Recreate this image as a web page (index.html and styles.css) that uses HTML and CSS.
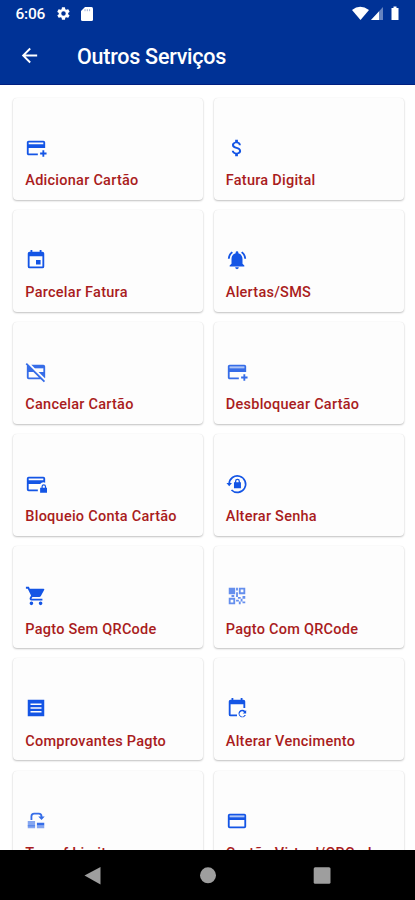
FILE: index.html
```html
<!DOCTYPE html>
<html lang="pt-BR">
<head>
<meta charset="utf-8">
<meta name="viewport" content="width=device-width">
<title>Outros Serviços</title>
<link rel="stylesheet" href="styles.css">
</head>
<body>
<div class="screen">
<header class="top">
  <div class="status">
    <span class="clock">6:06</span>
    <svg class="gear" viewBox="0 0 24 24"><path d="M19.4 13c.1-.3.1-.6.1-1s0-.7-.1-1l2.1-1.600a.5.5 0 0 0 .1-.6l-2-3.500a.5.5 0 0 0-.6-.2l-2.500 1a7 7 0 0 0-1.700-1l-.4-2.600a.5.5 0 0 0-.5-.4h-4a.5.5 0 0 0-.5.4L9 5.100a7 7 0 0 0-1.700 1l-2.500-1a.5.5 0 0 0-.6.2l-2 3.500a.5.5 0 0 0 .1.6L4.500 11a7 7 0 0 0 0 2l-2.200 1.600a.5.5 0 0 0-.1.6l2 3.500c.1.2.4.3.6.2l2.500-1a7 7 0 0 0 1.700 1l.4 2.600c0 .3.3.4.5.4h4c.3 0 .5-.2.5-.4l.4-2.600a7 7 0 0 0 1.700-1l2.500 1c.2.1.5 0 .6-.2l2-3.500a.5.5 0 0 0-.1-.6zM12 15.600a3.600 3.600 0 1 1 0-7.200 3.600 3.600 0 0 1 0 7.200z"/></svg>
    <svg class="sd" viewBox="0 0 12 14"><path d="M4 0h6.500Q12 0 12 1.500v11Q12 14 10.500 14h-9Q0 14 0 12.500V4z"/><path class="slots" d="M4 2.200v2M6.300 2.200v2M8.600 2.200v2"/></svg>
    <svg class="signals" viewBox="0 0 50 16"><path d="M0 4Q8-2.500 17 4L8.500 14z"/><path opacity=".4" d="M31 1v13H19z"/><path d="M27 5.500V14h-8z"/><path d="M39.500 2h2V.5h3V2h2v12h-7z"/></svg>
  </div>
  <div class="bar">
    <svg class="back" viewBox="0 0 24 24"><path d="M20 11H7.830l5.590-5.590L12 4l-8 8 8 8 1.410-1.410L7.830 13H20z"/></svg>
    <h1>Outros Serviços</h1>
  </div>
</header>
<main class="grid">
  <a class="card"><svg viewBox="0 0 24 24"><path d="M20 4H4C2.890 4 2 4.890 2 6v12c0 1.110.89 2 2 2h10v-2H4v-6h18V6c0-1.110-.89-2-2-2zm0 4H4V6h16zM19 14.500h2V17h2.500v2H21v2.500h-2V19h-2.500v-2H19z"/></svg><span>Adicionar Cartão</span></a>
  <a class="card"><svg viewBox="0 0 24 24"><path d="M11.800 10.900c-2.270-.59-3-1.200-3-2.150 0-1.090 1.010-1.850 2.700-1.850 1.780 0 2.440.85 2.500 2.100h2.210c-.07-1.720-1.120-3.300-3.210-3.810V3h-3v2.160C8.060 5.580 6.500 6.840 6.500 8.770c0 2.310 1.910 3.460 4.700 4.130 2.500.6 3 1.480 3 2.410 0 .69-.49 1.790-2.700 1.790-2.060 0-2.870-.92-2.980-2.100h-2.200c.12 2.190 1.760 3.420 3.680 3.830V21h3v-2.150c1.950-.37 3.500-1.500 3.500-3.550 0-2.840-2.430-3.810-4.700-4.400z"/></svg><span>Fatura Digital</span></a>
  <a class="card"><svg viewBox="0 0 24 24"><path d="M17 12h-5v5h5zM16 1v2H8V1H6v2H5a2 2 0 0 0-2 2v14a2 2 0 0 0 2 2h14a2 2 0 0 0 2-2V5a2 2 0 0 0-2-2h-1V1zm3 18H5V8h14z"/></svg><span>Parcelar Fatura</span></a>
  <a class="card"><svg viewBox="0 0 24 24"><path d="M7.580 4.080 6.150 2.650C3.750 4.480 2.170 7.300 2.030 10.500h2a8.450 8.450 0 0 1 3.550-6.420zM19.970 10.500h2c-.15-3.200-1.730-6.020-4.120-7.850l-1.420 1.430a8.500 8.500 0 0 1 3.540 6.420zM18 11c0-3.070-1.640-5.640-4.500-6.320V4a1.500 1.500 0 0 0-3 0v.68C7.630 5.360 6 7.920 6 11v5l-2 2v1h16v-1l-2-2zm-6 11a2 2 0 0 0 2-2h-4a2 2 0 0 0 2 2z"/></svg><span>Alertas/SMS</span></a>
  <a class="card"><svg class="soft" viewBox="0 0 24 24"><path opacity=".35" d="M8.800 6H20v2h-9.200z"/><path d="M6.830 4H20a2 2 0 0 1 2 2v12c0 .34-.09.66-.23.940L14.830 12H20V8h-9.170zM20.490 23.310 17.170 20H4a2 2 0 0 1-2-2V6c0-.34.08-.66.230-.93L.69 3.510 2.100 2.100l19.800 19.800zM4 12v6h11.170l-6-6z"/></svg><span>Cancelar Cartão</span></a>
  <a class="card"><svg class="soft" viewBox="0 0 24 24"><path opacity=".4" d="M4 6h16v2H4z"/><path d="M20 4H4C2.890 4 2 4.890 2 6v12c0 1.110.89 2 2 2h10v-2H4v-6h18V6c0-1.110-.89-2-2-2zm0 4H4V6h16zM19 14.500h2V17h2.500v2H21v2.500h-2V19h-2.500v-2H19z"/></svg><span>Desbloquear Cartão</span></a>
  <a class="card"><svg viewBox="0 0 24 24"><path d="M20 4H4a2 2 0 0 0-2 2v12a2 2 0 0 0 2 2h10v-2H4v-6h12.500q2-2.500 5.500-1.500V6a2 2 0 0 0-2-2zm0 4H4V6h16z"/><path fill-rule="evenodd" d="M23 16v-1.200a2.500 2.500 0 0 0-5 0V16h-1.500v5.500h8V16zm-3.700 0v-1.200a1.200 1.200 0 0 1 2.400 0V16z"/></svg><span>Bloqueio Conta Cartão</span></a>
  <a class="card"><svg viewBox="0 0 24 24"><path class="ring" d="M3.400 12a9 9 0 1 1 2.600 6.500"/><path d="M.5 11H6.500L3.500 14.500z"/><path fill-rule="evenodd" d="M15.200 10V9a2.700 2.700 0 0 0-5.400 0v1H8.700v6.500h7.600V10zm-4 0V9a1.300 1.300 0 0 1 2.600 0v1z"/></svg><span>Alterar Senha</span></a>
  <a class="card"><svg viewBox="0 0 24 24"><path d="M7 18a2 2 0 1 0 0 4 2 2 0 0 0 0-4zM1 2v2h2l3.600 7.590-1.350 2.450C4.520 15.370 5.480 17 7 17h12v-2H7.420a.25.25 0 0 1-.25-.25l.93-1.750h7.450c.75 0 1.410-.41 1.750-1.030l3.580-6.490A1 1 0 0 0 20 4H5.210l-.94-2zm16 16a2 2 0 1 0 0 4 2 2 0 0 0 0-4z"/></svg><span>Pagto Sem QRCode</span></a>
  <a class="card"><svg class="faint" viewBox="0 0 24 24"><path fill-rule="evenodd" d="M3 3h7v7H3zm2 2v3h3V5zM14 3h7v7h-7zm2 2v3h3V5zM3 14h7v7H3zm2 2v3h3v-3zM11 3h2v3h-2zM11 8h2v5h-2zM6 11h3v2H6zM13 13h3v2h-3zM11 16h3v2h-3zM16 15h2v3h-2zM18 12h3v3h-3zM14 18h2v3h-2zM18 18h3v2h-3zM5 5h3v3H5z"/></svg><span>Pagto Com QRCode</span></a>
  <a class="card"><svg viewBox="0 0 24 24"><path fill-rule="evenodd" d="M3 3h18v18H3zm3 4v1.700h12V7zm0 4.100v1.700h12v-1.700zm0 4.200V17h12v-1.700z"/></svg><span>Comprovantes Pagto</span></a>
  <a class="card"><svg viewBox="0 0 24 24"><path d="M12 21H5a2 2 0 0 1-2-2V5a2 2 0 0 1 2-2h1V1h2v2h8V1h2v2h1a2 2 0 0 1 2 2v7h-2V8H5v11h7z"/><path d="M21 15.200 22 14.200V18H18.200L19.700 16.500A2.800 2.800 0 1 0 20.200 19.700H21.700A4.200 4.200 0 1 1 21 15.200z"/></svg><span>Alterar Vencimento</span></a>
  <a class="card"><svg class="soft" viewBox="0 0 24 24"><path d="M6 11V7a4 4 0 0 1 4-4h5a4 4 0 0 1 4 4h2.500L18 11l-3.500-4H17a2 2 0 0 0-2-2h-5a2 2 0 0 0-2 2v4zM3 16.800h8v1H3zM13 14h8v3h-8z"/><path opacity=".6" d="M3 12h8v8H3zM13 17h8v3h-8z"/></svg><span>Transf Limite</span></a>
  <a class="card"><svg viewBox="0 0 24 24"><path opacity=".35" d="M4 6h16v2H4z"/><path d="M20 4H4a2 2 0 0 0-2 2v12a2 2 0 0 0 2 2h16a2 2 0 0 0 2-2V6a2 2 0 0 0-2-2zm0 14H4v-7h16zm0-10H4V6h16z"/></svg><span>Cartão Virtual/QRCode</span></a>
</main>
<nav class="nav">
  <svg viewBox="0 0 415 50"><path d="M84.500 25.500 100.500 17v17.500z"/><circle cx="208" cy="25.300" r="8"/><rect x="313.700" y="17.300" width="16.800" height="16.500" rx="1.500"/></svg>
</nav>
</div>
</body>
</html>
```
FILE: styles.css
```css
* { box-sizing: border-box; }
body { margin: 0; background: #fff; font-family: Roboto, sans-serif; }
svg { display: block; flex: none; }
.screen { display: flex; flex-direction: column; height: 900px; overflow: hidden; }
.top { flex: none; height: 85px; background: #003296; border-bottom: 1px solid #001f80; color: #fff; }
.top svg { fill: #fff; }
.status { display: flex; align-items: center; height: 27px; padding-left: 15.500px; }
.clock { width: 40px; padding-top: 1px; font-size: 15.500px; font-weight: 500; line-height: 26px; letter-spacing: -.2px; }
.gear { width: 15px; height: 15px; }
.sd { width: 12px; height: 14px; margin-left: 10.500px; }
.sd .slots { fill: none; stroke: #8799c6; stroke-width: .8; }
.signals { width: 50px; height: 16px; margin: 0 13px 0 auto; }
.bar { display: flex; align-items: center; height: 57px; padding-left: 18px; }
.back { width: 23px; height: 23px; margin-bottom: 1px; }
h1 { margin: 3px 0 0 36px; font-size: 21.500px; font-weight: 500; line-height: 28px; letter-spacing: -.25px; }
.grid { flex: 1; min-height: 0; overflow: hidden; display: grid; grid-template-columns: 190px 190px; grid-auto-rows: 101.600px; column-gap: 10.500px; row-gap: 10.500px; padding: 13px 0 0 13.300px; align-content: start; }
.card { padding: 39px 0 0 12px; border-radius: 4px; background: #fdfdfd; box-shadow: 0 1px 2px rgba(0,0,0,.24), 0 0 1px rgba(0,0,0,.1); }
.card svg { width: 22px; height: 22px; fill: #1455e5; }
.card .ring { fill: none; stroke: #1455e5; stroke-width: 1.800; }
.card .soft { opacity: .85; }
.card .faint { opacity: .65; }
.card span { display: block; margin-top: 12.200px; color: #a91c20; font-size: 14.500px; font-weight: 500; line-height: 20px; letter-spacing: .25px; white-space: nowrap; }
.nav { flex: none; height: 50px; background: #000; }
.nav svg { width: 415px; height: 50px; fill: #9e9e9e; }
```
